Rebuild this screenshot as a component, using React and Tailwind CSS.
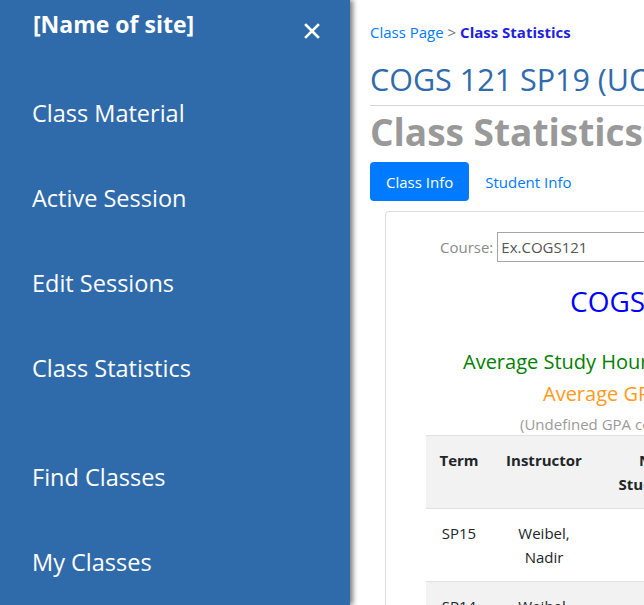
import React from "react";

const font = { fontFamily: '"Open Sans", "Noto Sans", sans-serif' };

function Sidebar() {
  const items1 = ["Class Material", "Active Session", "Edit Sessions", "Class Statistics"];
  const items2 = ["Find Classes", "My Classes"];
  return (
    <div className="relative z-10 w-[350px] shrink-0 h-full bg-[#2f6aab] text-white shadow-[3px_0_5px_rgba(0,0,0,0.5)]">
      <div className="h-[70px] flex items-start justify-between pl-[33px] pr-[30px]">
        <div className="pt-[9px] text-[23px] leading-[30px] font-bold">[Name of site]</div>
        <svg className="mt-[23px]" width="16" height="16" viewBox="0 0 16 16">
          <path d="M2 2 L14 14 M14 2 L2 14" stroke="white" strokeWidth="2.6" strokeLinecap="square" />
        </svg>
      </div>
      {items1.map((t) => (
        <div key={t} className="h-[85px] flex items-center pl-[32px] text-[23.5px] leading-[32px]">
          {t}
        </div>
      ))}
      <div className="h-[24px]" />
      {items2.map((t) => (
        <div key={t} className="h-[85px] flex items-center pl-[32px] text-[23.5px] leading-[32px]">
          {t}
        </div>
      ))}
    </div>
  );
}

function Main() {
  return (
    <div className="flex-1 min-w-0 overflow-hidden h-full bg-white pl-[20px]">
      <div className="w-[760px]">
        <div className="pt-[21px] text-[15px] leading-[22px]">
          <span className="text-[#007bff]">Class Page</span>
          <span className="text-[#6c757d]"> &gt; </span>
          <span className="text-[#1f1fdc] font-bold">Class Statistics</span>
        </div>
        <div className="mt-[18px] text-[30.5px] leading-[36px] text-[#306bac] whitespace-nowrap">
          COGS 121 SP19 (UCSD)
        </div>
        <div className="mt-[8px] h-px bg-[#d5d5d5]" />
        <div className="mt-[4px] text-[37px] leading-[44px] font-bold text-[#999999] whitespace-nowrap">
          Class Statistics
        </div>
        <div className="mt-[8px] flex text-[15px] leading-[24px]">
          <div className="px-[16px] py-[7.5px] rounded-[4px] bg-[#007bff] text-white">Class Info</div>
          <div className="px-[16px] py-[7.5px] text-[#007bff]">Student Info</div>
        </div>
        <div className="mt-[10px] ml-[15px] border border-[#dddddd] rounded-[4px] pt-[20px] h-[420px]">
          <div className="flex items-center pl-[54px]">
            <span className="text-[15px] text-[#8a8a8a] mr-[4px]">Course:</span>
            <div className="w-[300px] h-[30px] border border-[#a5a5a5] flex items-center pl-[3px] text-[15px] text-[#555555]">
              Ex.COGS121
            </div>
          </div>
          <div className="mt-[22px] pl-[184px] text-[28px] leading-[34px] text-[#0000ff] whitespace-nowrap">
            COGS 121
          </div>
          <div className="mt-[28px] pl-[77px] text-[20px] leading-[32px] text-[#008000] whitespace-nowrap">
            Average Study Hours: 5.2
          </div>
          <div className="pl-[157px] text-[20px] leading-[32px] text-[#ff9a1a] whitespace-nowrap">
            Average GPA: 3.45
          </div>
          <div className="mt-[3px] pl-[134px] text-[15px] leading-[22px] text-[#9a9a9a] whitespace-nowrap">
            (Undefined GPA counted as 0)
          </div>
          <div className="ml-[40px]">
            <table className="table-fixed border-collapse text-[15px] leading-[24px] text-[#212529] w-[420px]">
              <colgroup>
                <col className="w-[66px]" />
                <col className="w-[104px]" />
                <col className="w-[112px]" />
                <col className="w-[138px]" />
              </colgroup>
              <thead>
                <tr className="bg-[#f2f2f2] border-t border-b border-[#dee2e6]">
                  <th className="py-3 align-top text-center font-bold">Term</th>
                  <th className="py-3 align-top text-center font-bold">Instructor</th>
                  <th className="py-3 align-top text-center font-bold">No.<br />Students</th>
                  <th className="py-3 align-top text-center font-bold">Study<br />Hours</th>
                </tr>
              </thead>
              <tbody>
                <tr className="border-b border-[#dee2e6]">
                  <td className="py-3 align-top text-center">SP15</td>
                  <td className="py-3 align-top text-center">Weibel,<br />Nadir</td>
                  <td className="py-3 align-top text-center">7</td>
                  <td className="py-3 align-top text-center">5.1</td>
                </tr>
                <tr className="bg-[#f2f2f2] border-b border-[#dee2e6]">
                  <td className="py-3 align-top text-center">SP14</td>
                  <td className="py-3 align-top text-center">Weibel,<br />Nadir</td>
                  <td className="py-3 align-top text-center">7</td>
                  <td className="py-3 align-top text-center">4.8</td>
                </tr>
              </tbody>
            </table>
          </div>
        </div>
      </div>
    </div>
  );
}

export default function App() {
  return (
    <div className="flex w-[644px] h-[605px] overflow-hidden bg-white" style={font}>
      <Sidebar />
      <Main />
    </div>
  );
}
